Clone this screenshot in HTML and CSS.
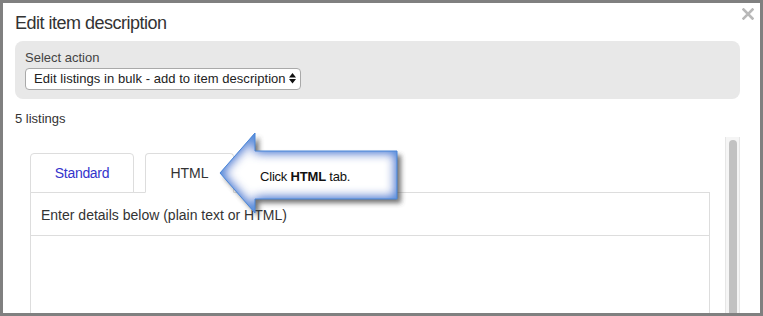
FILE: index.html
```html
<!DOCTYPE html>
<html>
<head>
<meta charset="utf-8">
<link rel="stylesheet" href="styles.css">
</head>
<body>
<div class="frame">
  <div class="close">
    <svg width="12" height="12" viewBox="0 0 12 12"><path d="M1.5 1.5 L10.5 10.5 M10.5 1.5 L1.5 10.5" stroke="#b8b8b8" stroke-width="2.6" stroke-linecap="square"/></svg>
  </div>
  <div class="title">Edit item description</div>
  <div class="actionbox">
    <div class="label">Select action</div>
    <div class="select">
      <span class="select-text">Edit listings in bulk - add to item description</span>
      <svg class="select-arrows" width="7" height="11" viewBox="0 0 7 11"><path d="M3.5 0 L7 4.5 L0 4.5 Z M0 6 L7 6 L3.5 10.5 Z" fill="#111"/></svg>
    </div>
  </div>
  <div class="count">5 listings</div>
  <div class="scrollarea">
    <div class="scrollcontent">
      <div class="tabs">
        <div class="tab tab-standard">Standard</div>
        <div class="tab tab-html active">HTML</div>
      </div>
      <div class="panel">
        <div class="panel-head">Enter details below (plain text or HTML)</div>
        <div class="panel-body"></div>
      </div>
    </div>
    <div class="scrollbar"><div class="thumb"></div></div>
  </div>
  <div class="callout">
    <svg width="200" height="100" viewBox="0 0 200 100">
      <defs>
        <filter id="shadow" x="-20%" y="-20%" width="140%" height="140%">
          <feGaussianBlur stdDeviation="2.5"/>
        </filter>
        <filter id="glow" x="-10%" y="-10%" width="120%" height="120%">
          <feGaussianBlur in="SourceAlpha" stdDeviation="6" result="b"/>
          <feComposite in="SourceAlpha" in2="b" operator="out" result="edge"/>
          <feFlood flood-color="#5a8fdc"/>
          <feComposite in2="edge" operator="in" result="g"/>
          <feMerge><feMergeNode in="SourceGraphic"/><feMergeNode in="g"/><feMergeNode in="g"/><feMergeNode in="g"/></feMerge>
        </filter>
      </defs>
      <polygon points="5,45 40,5 40,23 182,23 182,71 40,71 40,85" fill="#444" opacity="0.75" filter="url(#shadow)" transform="translate(4,4)"/>
      <polygon points="5,45 40,5 40,23 182,23 182,71 40,71 40,85" fill="#ffffff" filter="url(#glow)"/>
      <polygon points="5,45 40,5 40,23 182,23 182,71 40,71 40,85" fill="none" stroke="#4a86d8" stroke-width="1"/>
    </svg>
    <div class="callout-text">Click <b>HTML</b> tab.</div>
  </div>
</div>
</body>
</html>
```

FILE: styles.css
```css
html, body {
  margin: 0;
  padding: 0;
  background: #fff;
}
body {
  font-family: "Liberation Sans", Arial, sans-serif;
  color: #333;
}
.frame {
  position: relative;
  box-sizing: border-box;
  width: 763px;
  height: 316px;
  border: 3px solid #808080;
  padding: 9px 20px 0 12px;
  overflow: hidden;
  background: #fff;
}
.close {
  position: absolute;
  top: 5px;
  right: 6px;
  width: 12px;
  height: 12px;
}
.close svg { display: block; }
.title {
  font-size: 18px;
  line-height: 22px;
  height: 22px;
  letter-spacing: -0.5px;
  color: #333;
  margin-bottom: 7px;
}
.actionbox {
  background: #e8e8e8;
  border-radius: 8px;
  padding: 9px 10px 9px 10px;
  height: 40px;
}
.label {
  font-size: 13px;
  line-height: 16px;
  color: #444;
  margin-bottom: 2px;
}
.select {
  box-sizing: border-box;
  width: 276px;
  height: 22px;
  border: 1px solid #a9a9a9;
  border-radius: 4px;
  background: #fff;
  display: flex;
  align-items: center;
  padding: 0 4px 0 8px;
  justify-content: space-between;
}
.select-text {
  font-size: 13px;
  line-height: 16px;
  color: #222;
  letter-spacing: 0.05px;
  white-space: nowrap;
}
.select-arrows {
  display: block;
  margin-top: -2px;
}
.count {
  font-size: 13px;
  line-height: 16px;
  color: #333;
  margin-top: 12px;
  margin-bottom: 10px;
}
.scrollarea {
  display: flex;
  height: 200px;
}
.scrollcontent {
  flex: 1;
  padding: 16px 15px 0 15px;
}
.scrollbar {
  box-sizing: border-box;
  width: 15px;
  background: #f5f5f5;
  border-left: 1px solid #e6e6e6;
  border-right: 1px solid #e6e6e6;
  padding: 3px 2px 0 3px;
}
.thumb {
  width: 8px;
  height: 200px;
  background: #c2c2c2;
  border-radius: 4px;
}
.tabs {
  display: flex;
  gap: 11px;
  border-bottom: 1px solid #dddddd;
}
.tab {
  box-sizing: border-box;
  border: 1px solid #dddddd;
  border-radius: 4px 4px 0 0;
  margin-bottom: -1px;
  padding: 9px 0 9px 0;
  font-size: 14px;
  line-height: 20px;
  text-align: center;
  background: #fff;
}
.tab-standard {
  width: 104px;
  color: #3434cc;
  letter-spacing: -0.3px;
}
.tab-html {
  width: 89px;
  color: #333;
}
.tab.active {
  border-bottom-color: #fff;
}
.panel {
  border: 1px solid #dddddd;
  border-top: none;
}
.panel-head {
  padding: 12px 10px 10px 10px;
  font-size: 14px;
  line-height: 20px;
  color: #333;
  border-bottom: 1px solid #dddddd;
}
.panel-body {
  height: 120px;
}
.callout {
  position: absolute;
  left: 212px;
  top: 125px;
  width: 200px;
  height: 100px;
}
.callout svg {
  display: block;
}
.callout-text {
  position: absolute;
  left: 45px;
  top: 41px;
  font-size: 13px;
  line-height: 16px;
  letter-spacing: -0.2px;
  color: #111;
  white-space: nowrap;
}
.callout-text b {
  font-weight: bold;
}
```
